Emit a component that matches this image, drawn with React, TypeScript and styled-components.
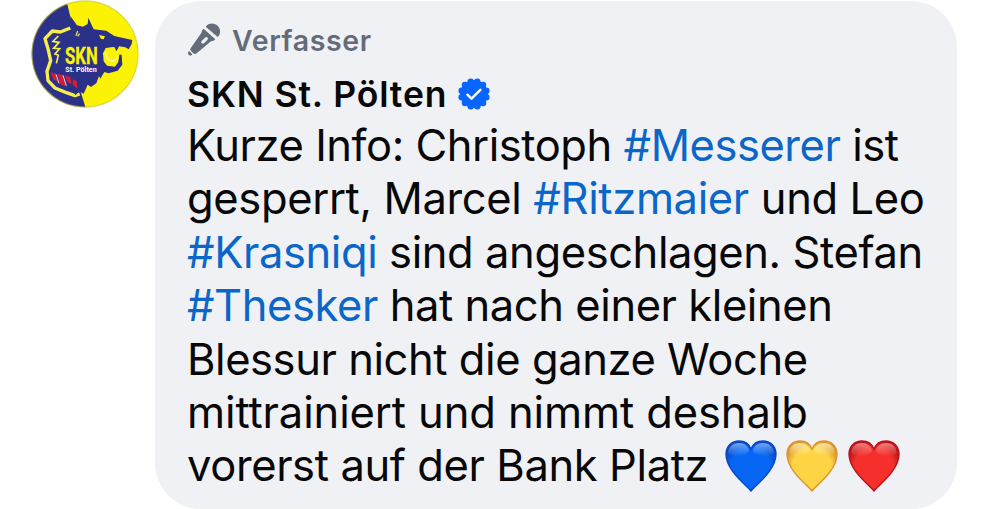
import styled, { createGlobalStyle } from 'styled-components';

const GlobalStyle = createGlobalStyle`
  * {
    box-sizing: border-box;
  }

  body {
    margin: 0;
    background: #ffffff;
    font-family: Inter, "Liberation Sans", sans-serif;
    overflow: hidden;
  }
`;

const Comment = styled.article`
  display: flex;
  align-items: flex-start;
  gap: 16px;
  width: 1000px;
  height: 509px;
  padding: 1px 43px 0 31px;
`;

const AvatarImage = styled.svg`
  display: block;
  flex: none;
  width: 108px;
  height: 108px;
  margin-top: -1px;
`;

const Bubble = styled.div`
  flex: 1;
  height: 508px;
  padding: 19px 0 0 32px;
  border-radius: 46px;
  background: #f0f1f5;
`;

const Role = styled.div`
  display: flex;
  align-items: center;
  gap: 11px;
  height: 40px;
  color: #656c79;
  font-size: 28.5px;
  font-weight: 600;
  letter-spacing: 0.6px;
`;

const RoleIcon = styled.svg`
  display: block;
  width: 34px;
  height: 34px;
`;

const Author = styled.div`
  display: flex;
  align-items: center;
  gap: 10px;
  height: 59px;
  padding-top: 9px;
  color: #080809;
  font-size: 35.5px;
  font-weight: 600;
  letter-spacing: 0.88px;
  white-space: nowrap;
`;

const Badge = styled.svg`
  display: block;
  width: 34px;
  height: 34px;
`;

const Message = styled.div`
  color: #080809;
  font-size: 43.5px;
  line-height: 53.4px;
`;

const Line = styled.div<{ $tracking?: number }>`
  display: flex;
  height: 53.4px;
  white-space: pre;
  letter-spacing: ${({ $tracking = 0 }) => $tracking}px;
`;

const Hashtag = styled.span`
  color: #0b66c9;
`;

const Hearts = styled.span`
  display: flex;
  align-items: center;
  gap: 9.2px;
  margin-left: 17px;
`;

const HeartIcon = styled.svg`
  display: block;
  width: 52px;
  height: 52px;
`;

const LogoText = styled.text`
  font-family: "Roboto", "Liberation Sans", sans-serif;
  font-weight: 700;
`;

const Avatar = () => (
  <AvatarImage viewBox="18 0 324 324">
    <defs>
      <clipPath id="crest">
        <circle cx="180" cy="162" r="160" />
      </clipPath>
    </defs>
    <g clipPath="url(#crest)">
      <rect x="18" y="0" width="324" height="324" fill="#fbf205" />
      <path d="M0 0H124L142 76L150 220L182 324H0Z" fill="#2b3089" />
      {/* shield outline */}
      <path
        d="M136 84L106 96L82 93L60 116L69 146L77 182L66 214L69 242L90 264L122 277L150 287L164 282"
        fill="none"
        stroke="#f5ee4c"
        strokeWidth="10"
        strokeLinejoin="round"
      />
      <path
        d="M100 108L84 124L102 127L86 145L104 146L90 162L100 166L94 190"
        fill="none"
        stroke="#f5ee4c"
        strokeWidth="5"
      />
      {/* wolf head */}
      <path
        d="M136 48L156 76L174 80L188 72L190 53L206 88L244 92L268 108L322 120L320 132L311 148L301 142L282 139L275 155L268 141L242 144L234 160L236 184L246 197L270 200L280 186L283 163L290 165L292 194L278 212L250 220L238 216L226 236L222 228L214 250L198 261L188 254L176 281L162 274L152 286L136 262L116 258L96 218L104 170L122 138L142 106Z"
        fill="#2b3089"
      />
      <path d="M222 105L240 109L236 118L228 117Z" fill="#fbf205" />
      {/* open jaw */}
      <path
        d="M244 145L265 142L272 157L282 141L290 142L284 162L277 178L266 185L250 182L240 172L238 158Z"
        fill="#fbf205"
      />
      <path
        d="M241 156Q243 180 262 183Q277 180 279 166"
        fill="none"
        stroke="#fdf9a0"
        strokeWidth="4"
      />
      <path d="M158 93L153 107M164 101L158 109" stroke="#e4e35a" strokeWidth="4" />
      <path d="M76 217L92 221L98 247L84 237ZM98 222L112 224L124 260L105 252ZM119 225L137 232L140 252L128 247ZM143 238L155 243L158 267L143 254Z" fill="#d31d38" />
      <path d="M93 223L102 250M114 226L124 257" stroke="#f2d9d7" strokeWidth="3" />
      <LogoText x="120" y="192" fontSize="74" textLength="98" lengthAdjust="spacingAndGlyphs" fill="#fbf205" stroke="#fbf205" strokeWidth="1">
        SKN
      </LogoText>
      <LogoText x="121" y="215" fontSize="21" textLength="94" lengthAdjust="spacingAndGlyphs" fill="#ffffff">
        St. Pölten
      </LogoText>
    </g>
    <circle cx="180" cy="162" r="159" fill="none" stroke="#c9c94a" strokeOpacity="0.6" strokeWidth="4" />
  </AvatarImage>
);

const Microphone = () => (
  <RoleIcon viewBox="0 0 102 102" fill="#656c79">
    <path d="M56 11C65 -1 83 -1 93 10C102 20 101 35 92 42Z" />
    <path d="M50 17L85 49C82 53 78 54 72 55L29 91C25 94 21 93 18 90L12 84C9 81 9 78 12 74L43 30C44 24 46 20 50 17ZM54 44L44 54C40 59 46 65 51 61L61 51C66 45 59 39 54 44Z" fillRule="evenodd" />
    <path d="M6 84L16 94C14 98 9 99 6 96C2 93 2 88 6 84Z" />
  </RoleIcon>
);

// the twelve scallops of the badge sit on a ring around its disc
const Verified = () => (
  <Badge viewBox="-17 -17 34 34">
    <g fill="#0866ff">
      <circle r="13.9" />
      {Array.from({ length: 12 }, (_, i) => {
        const angle = (i * Math.PI) / 6 + Math.PI / 12;
        return <circle key={i} cx={Math.cos(angle) * 12.8} cy={Math.sin(angle) * 12.8} r="3.2" />;
      })}
    </g>
    <path d="M-6.6 0.7L-2.5 4.7L6.4 -4.2" fill="none" stroke="#ffffff" strokeWidth="2.4" strokeLinecap="round" strokeLinejoin="round" />
  </Badge>
);

type HeartProps = {
  id: string;
  light: string;
  main: string;
  dark: string;
};

const heartPath =
  'M26 51C20 44 1 30 1 14C1 6 7 1 14 1C20 1 24 4 26 9C28 4 32 1 38 1C45 1 51 6 51 14C51 30 32 44 26 51Z';

const Heart = ({ id, light, main, dark }: HeartProps) => (
  <HeartIcon viewBox="0 0 52 52">
    <defs>
      <radialGradient id={`${id}-fill`} cx="0.5" cy="0.54" r="0.56">
        <stop offset="0" stopColor={main} />
        <stop offset="0.7" stopColor={main} />
        <stop offset="1" stopColor={dark} />
      </radialGradient>
      <linearGradient id={`${id}-shine`} x1="0" y1="0" x2="0" y2="1">
        <stop offset="0" stopColor={light} stopOpacity="0.8" />
        <stop offset="1" stopColor={light} stopOpacity="0" />
      </linearGradient>
    </defs>
    <path d={heartPath} fill={`url(#${id}-fill)`} stroke={dark} strokeWidth="1.4" />
    <path
      d="M3 13C4 6 8 3 14 3C20 3 23 6 24 11C20 17 8 18 3 13ZM49 13C48 6 44 3 38 3C32 3 29 6 28 11C32 17 44 18 49 13Z"
      fill={`url(#${id}-shine)`}
    />
  </HeartIcon>
);

const App = () => {
  return (
    <>
      <GlobalStyle />
      <Comment>
        <Avatar />
        <Bubble>
          <Role>
            <Microphone />
            Verfasser
          </Role>
          <Author>
            SKN St. Pölten
            <Verified />
          </Author>
          <Message>
            <Line $tracking={-0.45}>
              Kurze Info: Christoph <Hashtag>#Messerer</Hashtag> ist
            </Line>
            <Line $tracking={-0.36}>
              gesperrt, Marcel <Hashtag>#Ritzmaier</Hashtag> und Leo
            </Line>
            <Line $tracking={-0.41}>
              <Hashtag>#Krasniqi</Hashtag> sind angeschlagen. Stefan
            </Line>
            <Line $tracking={-0.43}>
              <Hashtag>#Thesker</Hashtag> hat nach einer kleinen
            </Line>
            <Line $tracking={-0.43}>Blessur nicht die ganze Woche</Line>
            <Line $tracking={-0.11}>mittrainiert und nimmt deshalb</Line>
            <Line $tracking={-0.39}>
              vorerst auf der Bank Platz
              <Hearts>
                <Heart id="blue" light="#8dbcff" main="#0866f5" dark="#0749c4" />
                <Heart id="yellow" light="#fff5b8" main="#fcd444" dark="#dc942b" />
                <Heart id="red" light="#ff9a94" main="#f5302c" dark="#b8141b" />
              </Hearts>
            </Line>
          </Message>
        </Bubble>
      </Comment>
    </>
  );
};

export default App;
